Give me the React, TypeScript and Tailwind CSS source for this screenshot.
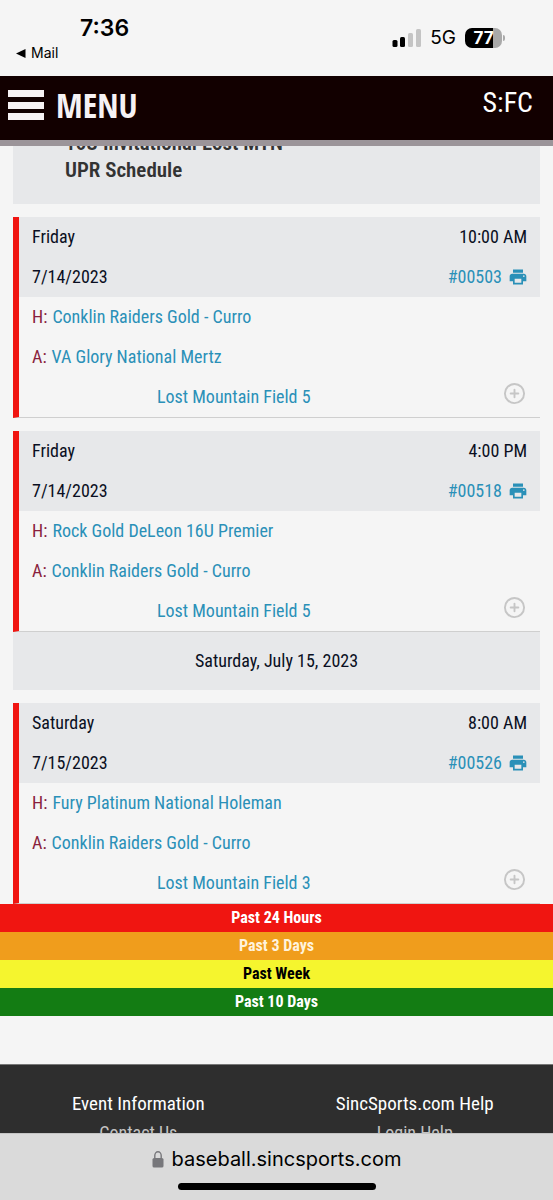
import { CirclePlus } from 'lucide-react'
import { MdPrint } from 'react-icons/md'

type Game = {
  id: string
  day: string
  date: string
  time: string
  home: string
  away: string
  field: string
}

const fridayGames: Game[] = [
  {
    id: '00503',
    day: 'Friday',
    date: '7/14/2023',
    time: '10:00 AM',
    home: 'Conklin Raiders Gold - Curro',
    away: 'VA Glory National Mertz',
    field: 'Lost Mountain Field 5',
  },
  {
    id: '00518',
    day: 'Friday',
    date: '7/14/2023',
    time: '4:00 PM',
    home: 'Rock Gold DeLeon 16U Premier',
    away: 'Conklin Raiders Gold - Curro',
    field: 'Lost Mountain Field 5',
  },
]

const saturdayGames: Game[] = [
  {
    id: '00526',
    day: 'Saturday',
    date: '7/15/2023',
    time: '8:00 AM',
    home: 'Fury Platinum National Holeman',
    away: 'Conklin Raiders Gold - Curro',
    field: 'Lost Mountain Field 3',
  },
]

const legend = [
  { label: 'Past 24 Hours', style: 'bg-[#f01511] text-white' },
  { label: 'Past 3 Days', style: 'bg-[#f09d1c] text-[#fff3dc]' },
  { label: 'Past Week', style: 'bg-[#f5f52e] text-black' },
  { label: 'Past 10 Days', style: 'bg-[#137c13] text-white' },
]

function StatusBar() {
  return (
    <div className="flex h-[76px] shrink-0 justify-between pl-4 pr-12 font-['Inter',sans-serif] text-black">
      <div className="flex flex-col items-start pt-4">
        <span className="pl-16 text-[23px] font-semibold leading-6">7:36</span>
        <a href="#mail" className="flex items-center gap-[5px] pt-1 text-sm leading-[18px]">
          <svg width="10" height="9" viewBox="0 0 10 9" aria-hidden="true">
            <path d="M0 4.5 9.5 0v9z" />
          </svg>
          Mail
        </a>
      </div>
      <div className="flex h-[76px] items-center gap-[9px]">
        <svg width="29" height="18" viewBox="0 0 29 18" aria-hidden="true">
          <rect x="0.5" y="11" width="5" height="7" rx="1.5" />
          <rect x="8" y="8" width="5" height="10" rx="1.5" />
          <rect x="16" y="4" width="5" height="14" rx="1.5" fill="#c4c4c4" />
          <rect x="24" y="0" width="5" height="18" rx="1.5" fill="#c4c4c4" />
        </svg>
        <span className="text-[19px] leading-6">5G</span>
        <div className="flex items-center gap-px">
          <div className="flex h-5 w-[37px] items-center justify-center rounded-[7px] bg-linear-to-r from-black from-77% to-[#a9a9a9] to-77%">
            <span className="text-[17px] font-bold leading-5 text-white">77</span>
          </div>
          <div className="h-[6px] w-[2px] rounded-r-full bg-[#a9a9a9]" />
        </div>
      </div>
    </div>
  )
}

function SiteHeader() {
  return (
    <header className="flex h-[70px] shrink-0 items-start justify-between border-b-[6px] border-[#9b9499] bg-[#120000] pl-2 pr-5 pt-[9px]">
      <button className="flex items-center gap-3 text-[#f6f2f4]">
        <svg width="36" height="32" viewBox="0 0 36 32" fill="currentColor" aria-hidden="true">
          <rect y="1" width="36" height="7" />
          <rect y="13" width="36" height="7" />
          <rect y="24" width="36" height="7" />
        </svg>
        <span className="font-['Open_Sans_Condensed',sans-serif] text-[34px] font-bold leading-10">MENU</span>
      </button>
      <span className="text-[28px] leading-9 text-white">S:FC</span>
    </header>
  )
}

function GameCard({ game }: { game: Game }) {
  return (
    <article className="mx-[13px] border-b border-l-[6px] border-b-[#cfcfcf] border-l-[#f01511] leading-10">
      <div className="bg-[#e7e8ea] px-[13px] text-[#0a0f22]">
        <div className="flex justify-between">
          <span>{game.day}</span>
          <span>{game.time}</span>
        </div>
        <div className="flex justify-between">
          <span>{game.date}</span>
          <a href={`#game-${game.id}`} className="flex items-center gap-1.5 text-[#2a90b8]">
            #{game.id}
            <MdPrint size={20} className="-mr-px" />
          </a>
        </div>
      </div>
      <div className="px-[13px] text-[#8a1f3d]">
        <div className="flex gap-[5px]">
          H: <a href="#home" className="text-[#2a90b8]">{game.home}</a>
        </div>
        <div className="flex gap-[5px]">
          A: <a href="#away" className="text-[#2a90b8]">{game.away}</a>
        </div>
        <div className="flex justify-between pl-[125px]">
          <a href="#field" className="text-[#2a90b8]">{game.field}</a>
          <button aria-label="Show more" className="flex h-8 items-center pr-px text-[#c6c6c6]">
            <CirclePlus size={23} strokeWidth={2} />
          </button>
        </div>
      </div>
    </article>
  )
}

function Footer() {
  return (
    <footer className="mt-12 grid grid-cols-2 border-t border-[#777] bg-[#2e2e2e] pb-10 pt-6 text-center">
      <div>
        <h2 className="text-[19px] leading-[30px] text-white">Event Information</h2>
        <a href="#contact" className="block leading-7 text-[#c4c4c4]">Contact Us</a>
      </div>
      <div>
        <h2 className="text-[19px] leading-[30px] text-white">SincSports.com Help</h2>
        <a href="#login" className="block leading-7 text-[#c4c4c4]">Login Help</a>
      </div>
    </footer>
  )
}

function AddressBar() {
  return (
    <div className="flex shrink-0 flex-col items-center border-t border-[#c4c4c4] bg-[#dadada] pb-[10px] pt-[11px] font-['Inter',sans-serif] text-black">
      <div className="flex items-center gap-2 text-xl leading-7">
        <svg width="12" height="17" viewBox="0 0 12 17" aria-hidden="true">
          <path d="M2.8 8V4.5a3.2 3.7 0 0 1 6.4 0V8" fill="none" stroke="#77777b" strokeWidth="1.4" />
          <rect x="0.5" y="7" width="11" height="9.5" rx="1.6" fill="#77777b" />
        </svg>
        baseball.sincsports.com
      </div>
      <div className="mt-[10px] h-[7px] w-[198px] rounded-full bg-black" />
    </div>
  )
}

export default function App() {
  return (
    <div className="flex h-screen flex-col overflow-hidden bg-[#f5f5f5] font-['Ubuntu_Condensed','Roboto_Condensed',sans-serif] text-lg">
      <StatusBar />
      <SiteHeader />
      <main className="min-h-0 flex-1 overflow-hidden">
        {/* scrolled part way under the header */}
        <h1 className="mx-[13px] -mt-4 mb-[13px] bg-[#e7e8ea] pb-5 pl-[52px] pr-52 text-[21px] font-semibold leading-[27px] text-[#333]">
          16U Invitational Lost MTN
          <br />
          UPR Schedule
        </h1>
        <div className="flex flex-col gap-[13px]">
          {fridayGames.map(game => <GameCard key={game.id} game={game} />)}
        </div>
        <h2 className="mx-[13px] mb-[13px] bg-[#e7e8ea] text-center leading-[58px] text-[#0a0f22]">
          Saturday, July 15, 2023
        </h2>
        {saturdayGames.map(game => <GameCard key={game.id} game={game} />)}
        <ul>
          {legend.map(row => (
            <li key={row.label} className={`text-center text-base font-bold leading-7 ${row.style}`}>
              {row.label}
            </li>
          ))}
        </ul>
        <Footer />
      </main>
      <AddressBar />
    </div>
  )
}
